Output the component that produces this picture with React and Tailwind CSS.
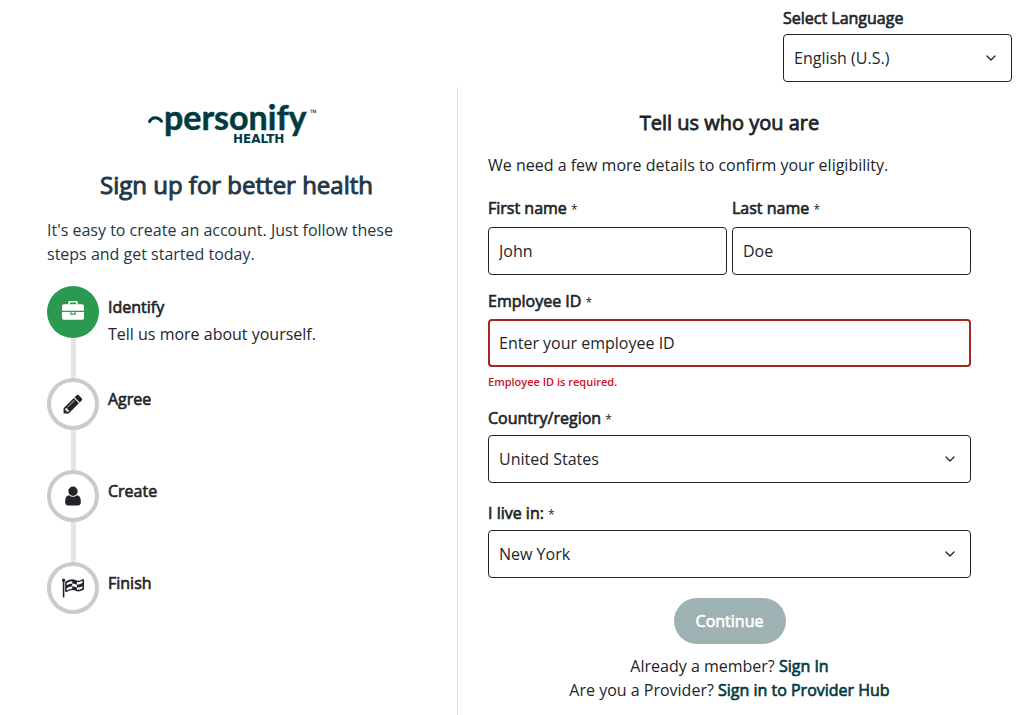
const strong = "[-webkit-text-stroke:0.04em_currentColor]";

const BriefcaseIcon = () => (
  <svg viewBox="0 0 1792 1792" className="size-[22px]" fill="currentColor" aria-hidden="true">
    <path d="M640 256h512v-128h-512v128zm1152 640v480q0 66-47 113t-113 47h-1472q-66 0-113-47t-47-113v-480h672v160q0 26 19 45t45 19h320q26 0 45-19t19-45v-160h672zm-768 0v128h-256v-128h256zm768-480v384h-1792v-384q0-66 47-113t113-47h352v-160q0-40 28-68t68-28h576q40 0 68 28t28 68v160h352q66 0 113 47t47 113z" />
  </svg>
);

const PencilIcon = () => (
  <svg viewBox="0 0 1792 1792" className="size-[22px]" fill="currentColor" aria-hidden="true">
    <path d="M491 1536l91-91-235-235-91 91v107h128v128h107zm523-928q0-22-22-22-10 0-17 7l-542 542q-7 7-7 17 0 22 22 22 10 0 17-7l542-542q7-7 7-17zm-54-192l416 416-832 832h-416v-416zm683 96q0 53-37 90l-166 166-416-416 166-165q36-38 90-38 53 0 91 38l235 234q37 39 37 91z" />
  </svg>
);

const UserIcon = () => (
  <svg viewBox="0 0 1792 1792" className="size-[22px]" fill="currentColor" aria-hidden="true">
    <path d="M1536 1399q0 109-62.5 187t-150.5 78h-854q-88 0-150.5-78t-62.5-187q0-85 8.5-160.5t31.5-152 58.5-131 94-89 134.5-34.5q131 128 313 128t313-128q76 0 134.5 34.5t94 89 58.5 131 31.5 152 8.5 160.5zm-256-887q0 159-112.5 271.5t-271.5 112.5-271.5-112.5-112.5-271.5 112.5-271.5 271.5-112.5 271.5 112.5 112.5 271.5z" />
  </svg>
);

const FlagIcon = () => (
  <svg viewBox="0 0 1792 1792" className="size-[22px]" fill="currentColor" aria-hidden="true">
    <circle cx="128" cy="256" r="128" />
    <path d="M64 300h128v1332q0 32-32 32h-64q-32 0-32-32z" />
    <path
      fillRule="evenodd"
      d="M256 430q0-35 31-56 330-190 545-190 170 0 330 78 90 46 170 46 120 0 340-130 30-16 66-16 54 0 54 64v763q0 39-35 57-260 138-438 138-110 0-250-75-120-60-220-60-200 0-485 165-16 10-33 10-75 0-75-64z
      M384 483v191q225-122 448-141v-194q-210 12-448 144z
      M384 907v185q225-121 448-141v-189q-205 19-448 145z
      M832 533v229q110-8 215 28 110 38 169 70v-224q-90-36-180-76-95-38-204-27z
      M1216 636v-225q180 40 448-107v190q-240 130-448 142z
      M1216 860q190 30 448-109v189q-250 128-448 96z"
    />
  </svg>
);

const ChevronDown = () => (
  <svg
    viewBox="0 0 12 12"
    className="pointer-events-none absolute right-[15px] top-[18px] size-3"
    fill="none"
    stroke="#212529"
    strokeWidth="1.3"
    strokeLinecap="round"
    strokeLinejoin="round"
    aria-hidden="true"
  >
    <path d="M2 4l4 4 4-4" />
  </svg>
);

const Logo = () => (
  <svg viewBox="0 0 178 46" className="mx-auto block h-[46px] w-[178px] overflow-visible" fill="#003b40" role="img" aria-label="Personify Health">
    <path d="M1.500 21.500 C4 16.500 10 16.500 13.500 21.200" fill="none" stroke="#003b40" strokeWidth="3" strokeLinecap="round" />
    <text x="16" y="30" fontFamily="Lato" fontWeight="700" fontSize="34" stroke="#003b40" strokeWidth="0.5">personify</text>
    <text x="85" y="43" fontFamily="DejaVu Sans" fontWeight="700" fontSize="12">HEALTH</text>
    <text x="162" y="16" fontFamily="Open Sans, sans-serif" fontWeight="700" fontSize="9">™</text>
  </svg>
);

const steps = [
  { title: "Identify", text: "Tell us more about yourself.", Icon: BriefcaseIcon, active: true },
  { title: "Agree", Icon: PencilIcon },
  { title: "Create", Icon: UserIcon },
  { title: "Finish", Icon: FlagIcon },
];

function Step({ title, text, Icon, active, last }) {
  return (
    <li className="flex">
      <div className="flex w-[52px] shrink-0 flex-col items-center">
        <div
          className={
            active
              ? "flex size-[52px] items-center justify-center rounded-full bg-[#2b9a50] text-white"
              : "flex size-[52px] items-center justify-center rounded-full border-4 border-[#cbcbcb] bg-white text-[#212529]"
          }
        >
          <Icon />
        </div>
        {!last && <div className="h-10 w-[5px] bg-[#e4e4e4]" />}
      </div>
      <div className="ml-[9px] pt-2">
        <h3 className={`text-base leading-[27px] text-[#212529] ${strong}`}>{title}</h3>
        {text && <p className="leading-[27px]">{text}</p>}
      </div>
    </li>
  );
}

function Label({ htmlFor, children }) {
  return (
    <label htmlFor={htmlFor} className="block leading-6">
      <span className={strong}>{children}</span> <span className="text-xs">*</span>
    </label>
  );
}

function Select({ id, options }) {
  return (
    <div className="relative">
      <select id={id} className="block h-12 w-full appearance-none rounded border border-[#212529] bg-white px-[10px] text-base text-[#212529]">
        {options.map((o) => (
          <option key={o}>{o}</option>
        ))}
      </select>
      <ChevronDown />
    </div>
  );
}

const inputClass = "block h-12 w-full rounded border border-[#212529] bg-white px-[10px] placeholder:text-[#212529]";

export default function App() {
  return (
    <div className="flex min-h-screen flex-col bg-white font-['Open_Sans',sans-serif] text-base text-[#212529]">
      <header className="flex h-[87px] justify-end pr-2 pt-[6px]">
        <div className="w-[229px]">
          <label htmlFor="language" className={`mb-1 block leading-6 ${strong}`}>Select Language</label>
          <Select id="language" options={["English (U.S.)", "Español", "Français"]} />
        </div>
      </header>

      <main className="grid flex-1 grid-cols-[458fr_562fr]">
        <section className="border-r border-[#dee2e6] pl-[47px] pr-[31px] pt-[13px]">
          <Logo />
          <h1 className={`mt-[23px] text-center text-2xl leading-8 text-[#253746] ${strong}`}>Sign up for better health</h1>
          <p className="mt-[17px] leading-6 text-[#253746]">It's easy to create an account. Just follow these steps and get started today.</p>
          <ol className="mt-5">
            {steps.map((s, i) => (
              <Step key={s.title} {...s} last={i === steps.length - 1} />
            ))}
          </ol>
        </section>

        <form className="pl-[30px] pr-[49px] pt-6" onSubmit={(e) => e.preventDefault()} noValidate>
          <h2 className={`text-center text-xl leading-6 ${strong}`}>Tell us who you are</h2>
          <p className="mt-[18px] leading-6">We need a few more details to confirm your eligibility.</p>

          <div className="mt-[19px] grid grid-cols-2 gap-[5px]">
            <div className="flex flex-col gap-[7px]">
              <Label htmlFor="first">First name</Label>
              <input id="first" className={inputClass} defaultValue="John" />
            </div>
            <div className="flex flex-col gap-[7px]">
              <Label htmlFor="last">Last name</Label>
              <input id="last" className={inputClass} defaultValue="Doe" />
            </div>
          </div>

          <div className="mt-[14px] flex flex-col gap-[6px]">
            <Label htmlFor="employee">Employee ID</Label>
            <input
              id="employee"
              className="block h-12 w-full rounded border-2 border-[#a52724] bg-white px-[9px] placeholder:text-[#212529]"
              placeholder="Enter your employee ID"
              aria-invalid="true"
              aria-describedby="employee-error"
            />
            <p id="employee-error" className="text-[11px] font-semibold leading-[18px] text-[#ce1126]">Employee ID is required.</p>
          </div>

          <div className="mt-[15px] flex flex-col gap-[5px]">
            <Label htmlFor="country">Country/region</Label>
            <Select id="country" options={["United States", "Canada"]} />
          </div>

          <div className="mt-[18px] flex flex-col gap-[5px]">
            <Label htmlFor="state">I live in:</Label>
            <Select id="state" options={["New York", "New Jersey"]} />
          </div>

          <button type="submit" className={`mx-auto mt-5 block h-[46px] w-28 rounded-full bg-[#9eb1b3] text-white ${strong}`}>
            Continue
          </button>

          <div className="mt-[10px] text-center leading-6">
            <p>Already a member? <a href="#sign-in" className={`text-[#003b40] ${strong}`}>Sign In</a></p>
            <p>Are you a Provider? <a href="#provider" className={`text-[#003b40] ${strong}`}>Sign in to Provider Hub</a></p>
          </div>
        </form>
      </main>
    </div>
  );
}
